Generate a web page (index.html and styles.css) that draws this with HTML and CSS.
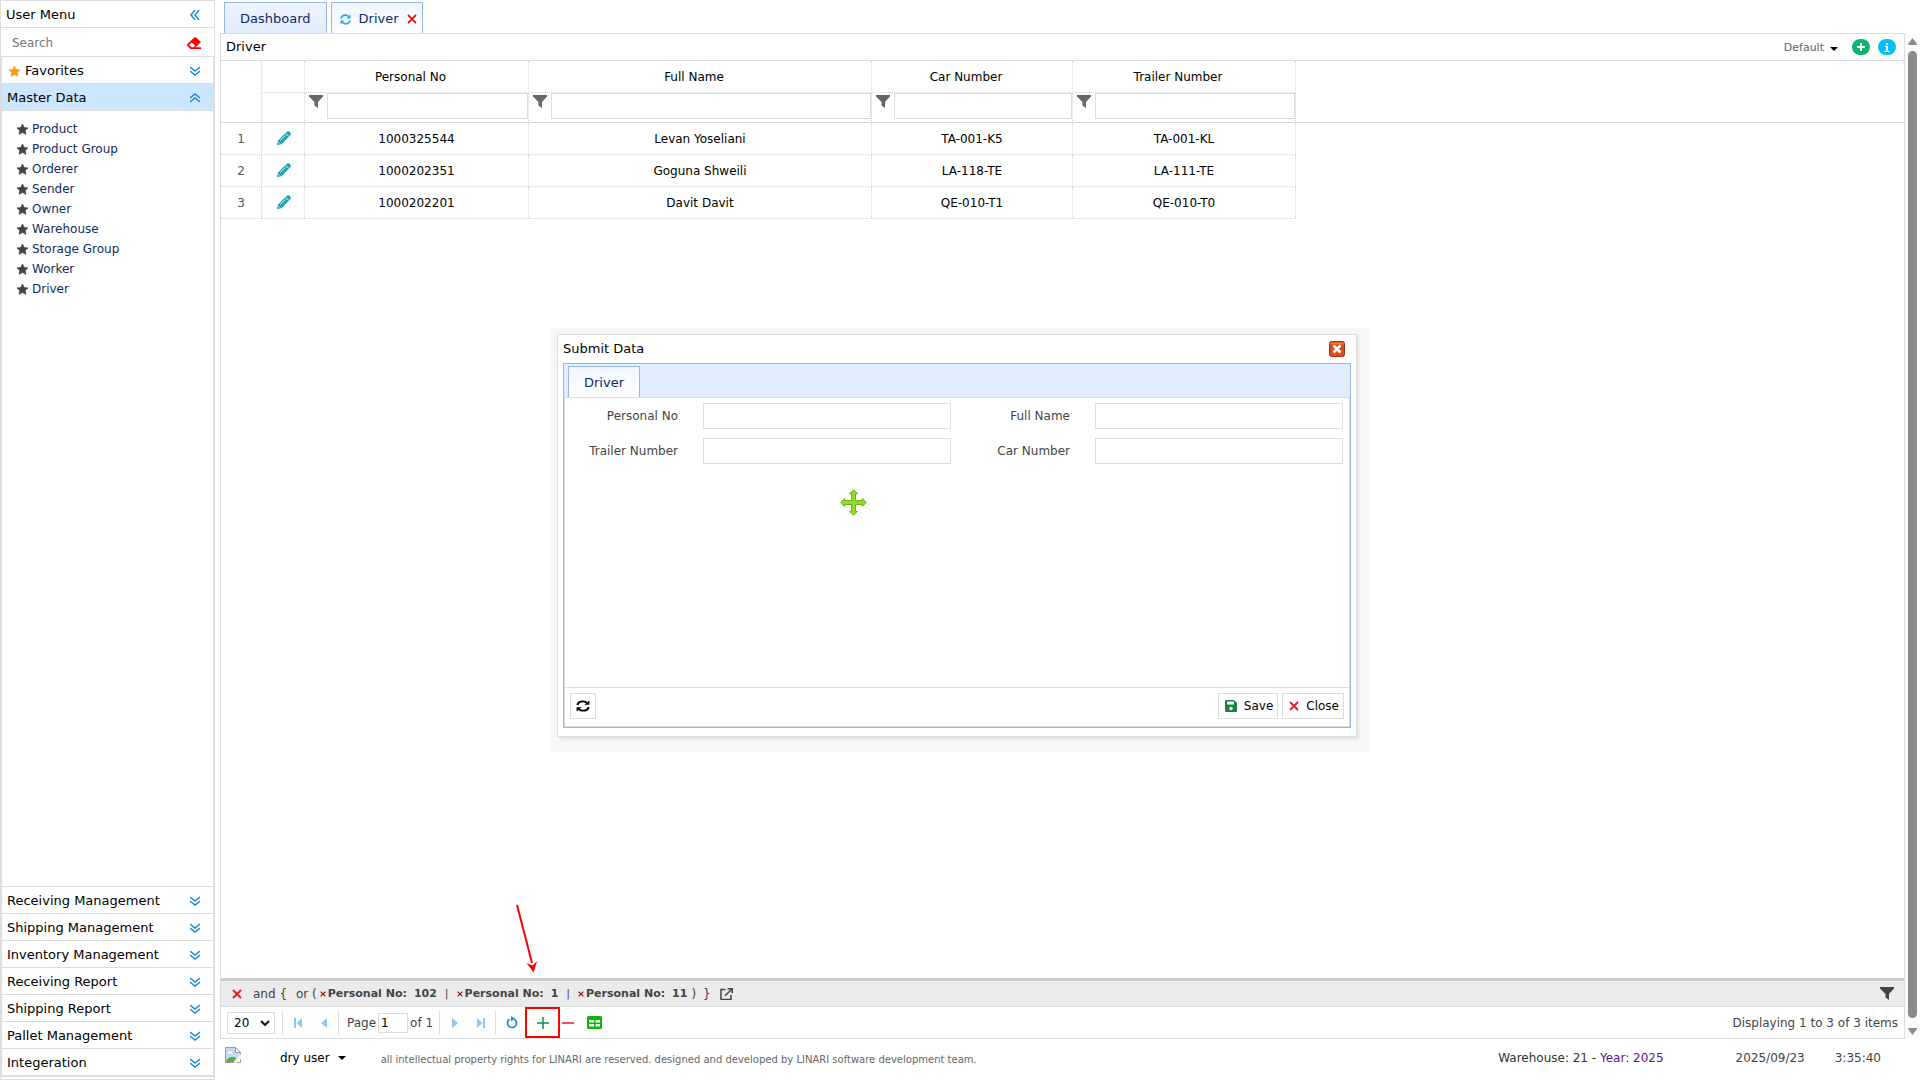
FILE: index.html
```html
<!DOCTYPE html>
<html lang="en">
<head>
<meta charset="utf-8">
<title>Driver</title>
<link rel="stylesheet" href="styles.css">
</head>
<body>
<svg class="defs" aria-hidden="true">
  <symbol id="i-down" viewBox="0 0 10 10"><path d="M0 1l5 4 5-4M0 5l5 4 5-4" fill="none" stroke="#1e88d8" stroke-width="1.5"/></symbol>
  <symbol id="i-star" viewBox="0 0 24 24"><path d="M12 0l3.6 7.6 8.4 1-6.200 5.700 1.700 8.300L12 18.500l-7.500 4.100 1.700-8.300L0 8.600l8.400-1z" fill="currentColor" stroke="currentColor" stroke-width="1.500"/></symbol>
  <symbol id="i-funnel" viewBox="0 0 14 13"><path d="M0 0h14v1.500L9 7v6L5.500 10.500V7L0 1.500z" fill="currentColor"/></symbol>
  <symbol id="i-pencil" viewBox="0 0 16 16"><path d="M0 16l1-5L10.500 1.500l4 4L5 15z" fill="#17a2b3"/><path d="M11.200.9c1-1 2.300-1 3.200 0l.8.8c.9.9.9 2.200 0 3.100l-.8.8-4-4z" fill="#17a2b3"/><path d="M10 2.800l3.300 3.300M3.500 11L10 4.600" stroke="#fff" fill="none"/><path d="M1.500 12.500l2 2" stroke="#fff" fill="none"/></symbol>
  <symbol id="i-x" viewBox="0 0 10 10"><path d="M1 1l8 8M9 1L1 9" stroke="currentColor" stroke-width="1.800" fill="none"/></symbol>
  <symbol id="i-sync" viewBox="0 0 12 12"><path d="M1.200 5C1.600 2.700 3.600 1.300 6 1.300c1.500 0 2.700.6 3.500 1.600M10.800 7c-.4 2.300-2.400 3.700-4.800 3.700-1.500 0-2.700-.6-3.500-1.600" stroke="currentColor" stroke-width="1.800" fill="none"/><path d="M11.500.5v4.300H7.200zM.5 11.500V7.200h4.300z" fill="currentColor"/></symbol>
  <symbol id="i-caret" viewBox="0 0 8 4"><path d="M0 0h8L4 4z" fill="currentColor"/></symbol>
</svg>

<div class="app">
  <aside class="sidebar">
    <header class="side-title"><span>User Menu</span>
      <button class="plain" aria-label="Collapse menu"><svg class="ic10"><g transform="rotate(90 5 5)"><use href="#i-down"/></g></svg></button></header>
    <div class="side-search">
      <input type="text" placeholder="Search" aria-label="Search">
      <button class="plain" aria-label="Clear"><svg width="14" height="12" viewBox="0 0 14 12"><path d="M.5 6.800L7.300.6q.9-.8 1.800 0l4 3.600q.9.8 0 1.700L8.500 10.300H14V12H3.500L.5 9.100q-1-1.200 0-2.300zM2 8l2.500 2.300h2L8.200 8.700 4.800 5.500z" fill="#f00" fill-rule="evenodd"/></svg></button>
    </div>
    <nav class="accordion">
      <button class="acc"><span class="fav"><svg class="star"><use href="#i-star"/></svg>Favorites</span><svg class="ic10"><use href="#i-down"/></svg></button>
      <button class="acc open"><span>Master Data</span><svg class="ic10 flip"><use href="#i-down"/></svg></button>
      <ul class="links">
        <li><a href="#"><svg class="star"><use href="#i-star"/></svg>Product</a></li>
        <li><a href="#"><svg class="star"><use href="#i-star"/></svg>Product Group</a></li>
        <li><a href="#"><svg class="star"><use href="#i-star"/></svg>Orderer</a></li>
        <li><a href="#"><svg class="star"><use href="#i-star"/></svg>Sender</a></li>
        <li><a href="#"><svg class="star"><use href="#i-star"/></svg>Owner</a></li>
        <li><a href="#"><svg class="star"><use href="#i-star"/></svg>Warehouse</a></li>
        <li><a href="#"><svg class="star"><use href="#i-star"/></svg>Storage Group</a></li>
        <li><a href="#"><svg class="star"><use href="#i-star"/></svg>Worker</a></li>
        <li><a href="#"><svg class="star"><use href="#i-star"/></svg>Driver</a></li>
      </ul>
      <button class="acc low"><span>Receiving Management</span><svg class="ic10"><use href="#i-down"/></svg></button>
      <button class="acc"><span>Shipping Management</span><svg class="ic10"><use href="#i-down"/></svg></button>
      <button class="acc"><span>Inventory Management</span><svg class="ic10"><use href="#i-down"/></svg></button>
      <button class="acc"><span>Receiving Report</span><svg class="ic10"><use href="#i-down"/></svg></button>
      <button class="acc"><span>Shipping Report</span><svg class="ic10"><use href="#i-down"/></svg></button>
      <button class="acc"><span>Pallet Management</span><svg class="ic10"><use href="#i-down"/></svg></button>
      <button class="acc"><span>Integeration</span><svg class="ic10"><use href="#i-down"/></svg></button>
    </nav>
  </aside>

  <div class="right">
    <div class="tabs">
      <button class="tab">Dashboard</button>
      <button class="tab active with-icons"><svg class="tab-sync"><use href="#i-sync"/></svg><span>Driver</span><svg class="ic10 red"><use href="#i-x"/></svg></button>
    </div>
    <div class="middle">
      <main class="panel">
        <header class="panel-head">
          <span>Driver</span>
          <div class="head-tools">
            <button class="plain default">Default <svg class="caret"><use href="#i-caret"/></svg></button>
            <button class="round green" aria-label="Add"><svg width="8" height="8"><path d="M4 0v8M0 4h8" stroke="#fff" stroke-width="2"/></svg></button>
            <button class="round blue" aria-label="Info"><svg width="6" height="9"><path d="M2 0h2v2H2zM1 3h3v5h1.500v1H.5V8H2V4H1z" fill="#fff"/></svg></button>
          </div>
        </header>
        <div class="grid-wrap">
          <table class="grid">
            <colgroup><col class="c-num"><col class="c-edit"><col class="c-pn"><col class="c-fn"><col class="c-car"><col class="c-tr"><col></colgroup>
            <thead>
              <tr class="names"><th rowspan="2"></th><th></th><th>Personal No</th><th>Full Name</th><th>Car Number</th><th>Trailer Number</th><th rowspan="2"></th></tr>
              <tr class="filters"><th></th>
                <th><div class="filter"><svg class="funnel"><use href="#i-funnel"/></svg><input type="text" aria-label="Filter Personal No"></div></th>
                <th><div class="filter"><svg class="funnel"><use href="#i-funnel"/></svg><input type="text" aria-label="Filter Full Name"></div></th>
                <th><div class="filter"><svg class="funnel"><use href="#i-funnel"/></svg><input type="text" aria-label="Filter Car Number"></div></th>
                <th><div class="filter"><svg class="funnel"><use href="#i-funnel"/></svg><input type="text" aria-label="Filter Trailer Number"></div></th></tr>
            </thead>
            <tbody>
              <tr><td class="num">1</td><td><button class="plain edit" aria-label="Edit"><svg class="pencil"><use href="#i-pencil"/></svg></button></td><td>1000325544</td><td>Levan Yoseliani</td><td>TA-001-K5</td><td>TA-001-KL</td></tr>
              <tr><td class="num">2</td><td><button class="plain edit" aria-label="Edit"><svg class="pencil"><use href="#i-pencil"/></svg></button></td><td>1000202351</td><td>Goguna Shweili</td><td>LA-118-TE</td><td>LA-111-TE</td></tr>
              <tr><td class="num">3</td><td><button class="plain edit" aria-label="Edit"><svg class="pencil"><use href="#i-pencil"/></svg></button></td><td>1000202201</td><td>Davit Davit</td><td>QE-010-T1</td><td>QE-010-T0</td></tr>
            </tbody>
          </table>
        </div>
        <div class="filterbar">
          <button class="plain clear" aria-label="Clear filters"><svg class="ic10 red"><use href="#i-x"/></svg></button>
          <span class="op">and {</span><span class="op">or (</span>
          <div class="rules">
            <span class="rule"><svg class="x6"><use href="#i-x"/></svg><b>Personal No:</b><b class="val">102</b></span><span>|</span>
            <span class="rule"><svg class="x6"><use href="#i-x"/></svg><b>Personal No:</b><b class="val">1</b></span><span>|</span>
            <span class="rule"><svg class="x6"><use href="#i-x"/></svg><b>Personal No:</b><b class="val">11</b></span>
          </div>
          <span class="close-group"><span>)</span><span>}</span></span>
          <button class="plain" aria-label="Open filter"><svg width="13" height="12" viewBox="0 0 13 12"><path d="M5.500 1.500H1v10h10V7M7.500.8h4.700v4.500M12 1L5 7.800" stroke="#444" stroke-width="1.500" fill="none"/></svg></button>
          <button class="plain end" aria-label="Filter"><svg class="funnel"><use href="#i-funnel"/></svg></button>
        </div>
        <div class="pager">
          <div class="select"><select aria-label="Page size"><option>20</option></select><svg width="10" height="6"><path d="M1 1l4 4 4-4" stroke="#111" stroke-width="2" fill="none"/></svg></div>
          <div class="nav-group">
            <button class="plain" aria-label="First page"><svg width="9" height="10"><path d="M0 0h2v10H0zM8 0v10L2.500 5z" fill="#8cc8f4"/></svg></button>
            <button class="plain" aria-label="Previous page"><svg width="8" height="10"><path d="M7 0v10L1 5z" fill="#8cc8f4"/></svg></button>
          </div>
          <div class="page-group"><label for="pg">Page</label><input id="pg" type="text" value="1"><span>of 1</span></div>
          <div class="nav-group">
            <button class="plain" aria-label="Next page"><svg width="8" height="10"><path d="M1 0v10l6-5z" fill="#8cc8f4"/></svg></button>
            <button class="plain" aria-label="Last page"><svg width="9" height="10"><path d="M7 0h2v10H7zM1 0v10l5.500-5z" fill="#8cc8f4"/></svg></button>
          </div>
          <div class="action-group">
            <button class="plain" aria-label="Refresh"><svg width="12" height="13" viewBox="0 0 12 13"><path d="M3.600 3.200A4.500 4.500 0 1 0 8.400 3.200" stroke="#1e88d8" stroke-width="1.700" fill="none"/><path d="M5 0l4 2.800L5 5.600z" fill="#1e88d8"/></svg></button>
            <div class="add-box">
              <button class="plain" aria-label="Add row"><svg width="12" height="12"><path d="M6 0v12M0 6h12" stroke="#1d8a4e" stroke-width="1.500"/></svg></button>
              <svg class="arrow" width="30" height="70" viewBox="0 0 30 70"><path d="M4 1l15 58" stroke="#f00" stroke-width="2"/><path d="M13.500 59l6 2.500L24 57l-3.300 11.500z" fill="#f00"/></svg>
            </div>
            <button class="plain" aria-label="Delete row"><svg width="12" height="12"><path d="M0 6h12" stroke="#f01c1c" stroke-width="1.500"/></svg></button>
            <button class="plain sheet" aria-label="Export"><svg width="15" height="13"><rect width="15" height="13" rx="1.500" fill="#0bb50b"/><path d="M2 4h5v2.500H2zM8.500 4H13v2.500H8.500zM2 8h5v2.500H2zM8.500 8H13v2.500H8.500z" fill="#fff"/></svg></button>
          </div>
          <span class="summary">Displaying 1 to 3 of 3 items</span>
        </div>
      </main>
      <div class="scroll" aria-hidden="true">
        <svg width="9" height="7"><path d="M4.500 0L9 6q0 1-1 1H1Q0 7 0 6z" fill="#8b8b8b"/></svg>
        <div class="thumb"></div>
        <svg width="9" height="7"><path d="M4.500 7L9 1q0-1-1-1H1Q0 0 0 1z" fill="#8b8b8b"/></svg>
      </div>
    </div>
    <footer class="foot">
      <svg class="broken" width="16" height="16"><path d="M.5.500h10l5 5V9l-5 6.500H.5z" fill="#c3d9f5" stroke="#9a9a9a"/><path d="M10.500.500v5h5z" fill="#fff" stroke="#9a9a9a"/><path d="M2.500 6.500q1-3 3.500-2 2 1 2 2z" fill="#fff"/><path d="M1 15q1-4 5-5 4-.5 5.500 1L9 15z" fill="#5aad35"/><path d="M8 15.500L16 7v2l-5 6.500z" fill="#fff"/><path d="M12 15.500h3.500V12" fill="none" stroke="#9a9a9a"/></svg>
      <button class="plain user">dry user <svg class="caret"><use href="#i-caret"/></svg></button>
      <span class="rights">all intellectual property rights for LINARI are reserved. designed and developed by LINARI software development team.</span>
      <span class="wh">Warehouse: 21 - <a href="#">Year: 2025</a></span>
      <span class="date">2025/09/23</span>
      <span class="time">3:35:40</span>
    </footer>
  </div>
</div>

<div class="dialog-frame">
  <section class="dialog" role="dialog" aria-labelledby="dlg-title">
    <header class="dlg-head"><span id="dlg-title">Submit Data</span>
      <button class="plain" aria-label="Close dialog"><svg width="16" height="16"><rect x=".5" y=".5" width="15" height="15" rx="2" fill="#dd4b18" stroke="#96341a"/><path d="M1.500 1.500h13v2h-13z" fill="#ee7a3e"/><path d="M4.500 4.500l7 7M11.500 4.500l-7 7" stroke="#fff" stroke-width="2.500"/></svg></button></header>
    <div class="dlg-body">
      <div class="dlg-tabs"><button class="tab active">Driver</button></div>
      <form class="dlg-panel">
        <div class="fields">
          <label for="f1">Personal No</label><input id="f1" type="text">
          <label for="f2">Full Name</label><input id="f2" type="text">
          <label for="f3">Trailer Number</label><input id="f3" type="text">
          <label for="f4">Car Number</label><input id="f4" type="text">
        </div>
        <svg class="move" width="27" height="27" viewBox="0 0 27 27"><path d="M13.500 .7l4 4h-2v6.800h6.800v-2l4 4-4 4v-2h-6.800v6.800h2l-4 4-4-4h2v-6.800H4.700v2l-4-4 4-4v2h6.800V4.700h-2z" fill="#8fdc2c" stroke="#6cb11c"/></svg>
        <div class="dlg-foot">
          <button type="button" class="btn sq" aria-label="Refresh"><svg width="14" height="12" viewBox="0 0 12 12" preserveAspectRatio="none"><use href="#i-sync"/></svg></button>
          <button type="button" class="btn right-start"><svg width="12" height="12"><path d="M0 1q0-1 1-1h8l3 3v8q0 1-1 1H1q-1 0-1-1z" fill="#1b8044"/><path d="M2 1.500h7v3H2z" fill="#fff"/><circle cx="6" cy="8.500" r="1.700" fill="#fff"/></svg>Save</button>
          <button type="button" class="btn"><svg class="ic10 red"><use href="#i-x"/></svg>Close</button>
        </div>
      </form>
    </div>
  </section>
</div>
</body>
</html>
```
FILE: styles.css
```css
* { box-sizing: border-box; }
body { margin: 0; font: 12px/16px "DejaVu Sans", Verdana, sans-serif; color: #444; background: #fff; }
button, input, select { font: inherit; color: inherit; margin: 0; }
svg { display: block; flex: none; }
.defs { position: absolute; width: 0; height: 0; }
.plain { border: 0; padding: 0; background: none; display: flex; align-items: center; }
input { border: 1px solid #ddd; background: #fff; min-width: 0; }
a { text-decoration: none; color: #0e2d5f; }
.ic10 { width: 10px; height: 10px; }
.flip { transform: rotate(180deg); }
.red { color: #e01b1b; }
.star { width: 11px; height: 11px; }
.funnel { width: 14px; height: 13px; }
.caret { width: 8px; height: 4px; color: #000; }

.app { display: flex; height: 100vh; }
.sidebar { width: 215px; flex: none; margin-right: 5px; border: 1px solid #ddd; display: flex; flex-direction: column; padding-bottom: 2px; }
.side-title { height: 27px; padding: 2px 14px 0 5px; display: flex; align-items: center; justify-content: space-between; border-bottom: 1px solid #ddd; font-size: 13px; color: #000; }
.side-search { height: 28px; display: flex; align-items: center; padding: 2px 13px 0 9px; }
.side-search input { flex: 1; border: 0; padding: 0 2px; }
.side-search input::placeholder { color: #777; opacity: 1; }
.accordion { flex: 1; border: 1px solid #ddd; display: flex; flex-direction: column; }
.acc { height: 27px; flex: none; border: 0; border-bottom: 1px solid #ddd; background: #fff; padding: 2px 13px 0 5px; display: flex; align-items: center; justify-content: space-between; font-size: 13px; color: #000; }
.acc.low { height: 28px; border-top: 1px solid #ddd; }
.acc.open { background: #cce6ff; }
.fav { display: flex; align-items: center; gap: 5px; padding-left: 2px; }
.fav .star { color: #ff9a0d; }
.links { flex: 1; list-style: none; margin: 0; padding: 8px 15px; color: #444; }
.links a { display: flex; align-items: center; gap: 4px; height: 20px; }
.links .star { color: #444; }

.right { flex: 1; min-width: 0; display: flex; flex-direction: column; }
.tabs { height: 33px; display: flex; align-items: flex-end; gap: 4px; padding-left: 4px; }
.tab { height: 31px; padding: 2px 15px 0; border: 1px solid #95b8e7; border-bottom: 0; background: linear-gradient(#eff5ff, #e0ecff); color: #0e2d5f; font-size: 13px; }
.tab.active { background: linear-gradient(#eff5ff, #fff); }
.with-icons { display: flex; align-items: center; gap: 8px; padding: 2px 5px 0 8px; }
.tab-sync { width: 11px; height: 11px; color: #17a9f5; }
.middle { flex: 1; min-height: 0; display: flex; }
.panel { flex: 1; min-width: 0; border: 1px solid #ddd; display: flex; flex-direction: column; }
.panel-head { height: 27px; flex: none; border-bottom: 1px solid #ddd; padding: 0 8px 0 5px; display: flex; align-items: center; justify-content: space-between; font-size: 13px; color: #000; }
.head-tools { display: flex; align-items: center; gap: 8px; }
.default { font-size: 11px; gap: 6px; color: #666; margin-right: 6px; padding-top: 2px; }
.default .caret { margin-top: 2px; }
.round { width: 18px; height: 16px; border: 0; border-radius: 8px; padding: 0; display: flex; align-items: center; justify-content: center; }
.green { background: #0cb468; }
.blue { background: #05c0f2; }

.grid-wrap { flex: 1; min-height: 0; }
.grid { width: 100%; table-layout: fixed; border-collapse: separate; border-spacing: 0; color: #000; }
.c-num { width: 41px; } .c-edit { width: 43px; } .c-pn { width: 224px; } .c-fn { width: 343px; } .c-car { width: 201px; } .c-tr { width: 223px; }
.grid th, .grid td { padding: 0; font-weight: normal; text-align: center; border: 0 dotted #d5d5d5; border-right-width: 1px; border-bottom-width: 1px; }
.grid td { height: 32px; }
.grid .edit { width: 100%; justify-content: center; padding: 0 0 2px 2px; }
.names th { height: 32px; padding-right: 12px; }
.filters th { height: 30px; vertical-align: top; }
.grid .filters th, .grid .names th[rowspan] { border-bottom: 1px solid #ddd; }
.grid .names th:last-child { border-right: 0; }
.filter { display: flex; gap: 4px; padding-left: 4px; color: #666; }
.filter .funnel { margin-top: 2px; }
.filter input { flex: 1; height: 26px; }
.grid .num { color: #555; }
.pencil { width: 14px; height: 14px; }

.filterbar { height: 29px; flex: none; border-top: 3px solid #ccc; border-bottom: 1px solid #ddd; background: #ebebeb; display: flex; align-items: center; padding: 0 10px 0 11px; }
.clear { margin-right: 11px; }
.op { margin-right: 9px; }
.op + .op { margin-right: 3px; }
.rules { display: flex; gap: 8px; font-size: 11px; }
.rule { display: flex; align-items: center; gap: 2px; }
.rule .val { margin-left: 5px; }
.x6 { width: 6px; height: 6px; color: #8a0f0f; }
.close-group { display: flex; gap: 7px; margin: 0 9px 0 4px; }
.end { margin-left: auto; }

.pager { height: 31px; flex: none; display: flex; align-items: center; padding: 0 6px; }
.select { display: flex; align-items: center; width: 48px; height: 22px; border: 1px solid #ddd; padding: 0 4px 0 6px; color: #000; }
.select select { appearance: none; border: 0; background: none; flex: 1; min-width: 0; padding: 0; }
.nav-group, .page-group, .action-group { display: flex; align-items: center; height: 24px; border-left: 1px solid #ddd; }
.select + .nav-group { margin-left: 7px; }
.nav-group { gap: 17px; padding: 0 10px 0 11px; }
.page-group { padding: 0 6px 0 8px; gap: 2px; }
.page-group input { width: 30px; height: 20px; padding: 0 2px; color: #000; }
.action-group { padding-left: 10px; gap: 2px; }
.add-box { position: relative; width: 35px; height: 31px; margin-left: 5px; border: 2px solid #f00; display: flex; align-items: center; justify-content: center; }
.arrow { position: absolute; left: -14px; bottom: 62px; }
.sheet { margin-left: 11px; }
.summary { margin-left: auto; }

.scroll { width: 15px; flex: none; background: #fcfcfc; display: flex; flex-direction: column; align-items: center; padding: 5px 0 4px; gap: 6px; }
.thumb { flex: 1; width: 9px; border-radius: 5px; background: #8b8b8b; margin-bottom: 4px; }

.foot { height: 41px; flex: none; display: flex; align-items: center; padding: 0 39px 4px 5px; }
.broken { margin-bottom: 6px; }
.user { margin-left: 39px; gap: 8px; color: #000; }
.rights { font-size: 10px; margin-left: 35px; padding-top: 4px; color: #666; }
.wh { margin-left: auto; color: #333; }
.wh a { color: #551a8b; }
.date { margin-left: 72px; }
.time { margin-left: 30px; }

.dialog-frame { position: absolute; left: 50%; top: 50%; width: 820px; max-width: 100%; transform: translate(-50%, -50%); padding: 6px 13px 15px 7px; background: #f7f7f7; }
.dialog { background: #fff; border: 1px solid #ddd; padding: 0 5px 8px; box-shadow: 2px 2px 3px #e4e4e4; }
.dlg-head { height: 28px; display: flex; align-items: center; justify-content: space-between; padding-right: 6px; font-size: 13px; color: #000; }
.dlg-body { border: 1px solid #95b8e7; }
.dlg-tabs { background: #e0ecff; padding: 2px 0 0 4px; display: flex; }
.dlg-panel { border: 1px solid #ddd; height: 330px; display: flex; flex-direction: column; }
.fields { display: grid; grid-template-columns: 113px 1fr 94px 1fr; gap: 9px 25px; padding: 5px 6px 0 0; align-items: center; }
.fields label { text-align: right; }
.fields input { height: 26px; width: 100%; }
.move { margin: 25px 0 0 275px; }
.dlg-foot { margin-top: auto; height: 39px; border-top: 1px solid #ddd; padding: 5px; display: flex; gap: 4px; align-items: flex-start; }
.btn { height: 26px; border: 1px solid #ddd; background: #fff; padding: 0 4px 0 6px; display: flex; align-items: center; gap: 7px; color: #000; }
.btn.sq { width: 26px; padding: 0; justify-content: center; }
.right-start { margin-left: auto; }
```
